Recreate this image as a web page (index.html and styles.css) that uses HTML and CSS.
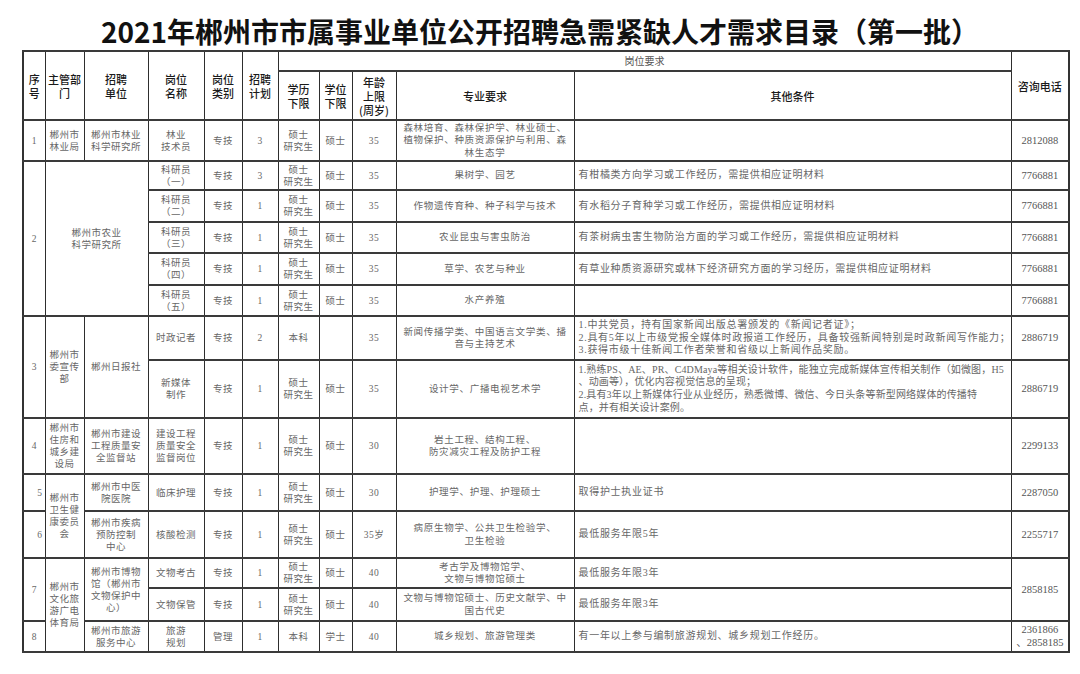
FILE: index.html
```html
<!DOCTYPE html>
<html lang="zh-CN">
<head>
<meta charset="utf-8">
<title>2021年郴州市市属事业单位公开招聘急需紧缺人才需求目录（第一批）</title>
<link rel="stylesheet" href="styles.css">
</head>
<body>
<h1 class="title">2021年郴州市市属事业单位公开招聘急需紧缺人才需求目录（第一批）</h1>
<table class="grid">
<colgroup>
<col class="c-no"><col class="c-dept"><col class="c-unit"><col class="c-post"><col class="c-type"><col class="c-plan"><col class="c-edu"><col class="c-deg"><col class="c-age"><col class="c-major"><col class="c-other"><col class="c-tel">
</colgroup>
<thead>
<tr class="hh1">
<th rowspan="2">序<br>号</th>
<th rowspan="2">主管部<br>门</th>
<th rowspan="2">招聘<br>单位</th>
<th rowspan="2">岗位<br>名称</th>
<th rowspan="2">岗位<br>类别</th>
<th rowspan="2">招聘<br>计划</th>
<th colspan="5" class="sub">岗位要求</th>
<th rowspan="2">咨询电话</th>
</tr>
<tr class="hh2">
<th>学历<br>下限</th>
<th>学位<br>下限</th>
<th>年龄<br>上限<br>(周岁)</th>
<th>专业要求</th>
<th>其他条件</th>
</tr>
</thead>
<tbody>
<tr class="r41">
<td>1</td><td>郴州市<br>林业局</td><td>郴州市林业<br>科学研究所</td><td>林业<br>技术员</td><td>专技</td><td>3</td><td>硕士<br>研究生</td><td>硕士</td><td>35</td>
<td class="major">森林培育、森林保护学、林业硕士、<br>植物保护、种质资源保护与利用、森<br>林生态学</td><td class="other"></td><td class="tel">2812088</td>
</tr>
<tr class="r29">
<td rowspan="5">2</td><td colspan="2" rowspan="5">郴州市农业<br>科学研究所</td><td>科研员<br>（一）</td><td>专技</td><td>3</td><td>硕士<br>研究生</td><td>硕士</td><td>35</td>
<td class="major">果树学、园艺</td><td class="other">有柑橘类方向学习或工作经历，需提供相应证明材料</td><td class="tel">7766881</td>
</tr>
<tr class="r32">
<td>科研员<br>（二）</td><td>专技</td><td>1</td><td>硕士<br>研究生</td><td>硕士</td><td>35</td>
<td class="major">作物遗传育种、种子科学与技术</td><td class="other">有水稻分子育种学习或工作经历，需提供相应证明材料</td><td class="tel">7766881</td>
</tr>
<tr class="r31">
<td>科研员<br>（三）</td><td>专技</td><td>1</td><td>硕士<br>研究生</td><td>硕士</td><td>35</td>
<td class="major">农业昆虫与害虫防治</td><td class="other">有茶树病虫害生物防治方面的学习或工作经历，需提供相应证明材料</td><td class="tel">7766881</td>
</tr>
<tr class="r32">
<td>科研员<br>（四）</td><td>专技</td><td>1</td><td>硕士<br>研究生</td><td>硕士</td><td>35</td>
<td class="major">草学、农艺与种业</td><td class="other">有草业种质资源研究或林下经济研究方面的学习经历，需提供相应证明材料</td><td class="tel">7766881</td>
</tr>
<tr class="r31">
<td>科研员<br>（五）</td><td>专技</td><td>1</td><td>硕士<br>研究生</td><td>硕士</td><td>35</td>
<td class="major">水产养殖</td><td class="other"></td><td class="tel">7766881</td>
</tr>
<tr class="r44">
<td rowspan="2">3</td><td rowspan="2">郴州市<br>委宣传<br>部</td><td rowspan="2">郴州日报社</td><td>时政记者</td><td>专技</td><td>2</td><td>本科</td><td></td><td>35</td>
<td class="major">新闻传播学类、中国语言文学类、播<br>音与主持艺术</td>
<td class="other">1.中共党员，持有国家新闻出版总署颁发的《新闻记者证》；<br>2.具有5年以上市级党报全媒体时政报道工作经历，具备较强新闻特别是时政新闻写作能力；<br>3.获得市级十佳新闻工作者荣誉和省级以上新闻作品奖励。</td>
<td class="tel">2886719</td>
</tr>
<tr class="r58">
<td>新媒体<br>制作</td><td>专技</td><td>1</td><td>硕士<br>研究生</td><td>硕士</td><td>35</td>
<td class="major">设计学、广播电视艺术学</td>
<td class="other tight">1.熟练PS、AE、PR、C4DMaya等相关设计软件，能独立完成新媒体宣传相关制作（如微图，H5<br>、动画等），优化内容视觉信息的呈现；<br>2.具有3年以上新媒体行业从业经历，熟悉微博、微信、今日头条等新型网络媒体的传播特<br>点，并有相关设计案例。</td>
<td class="tel">2886719</td>
</tr>
<tr class="r56">
<td>4</td><td>郴州市<br>住房和<br>城乡建<br>设局</td><td>郴州市建设<br>工程质量安<br>全监督站</td><td>建设工程<br>质量安全<br>监督岗位</td><td>专技</td><td>1</td><td>硕士<br>研究生</td><td>硕士</td><td>30</td>
<td class="major">岩土工程、结构工程、<br>防灾减灾工程及防护工程</td><td class="other"></td><td class="tel">2299133</td>
</tr>
<tr class="r37">
<td class="rt">5</td><td rowspan="2">郴州市<br>卫生健<br>康委员<br>会</td><td>郴州市中医<br>院医院</td><td>临床护理</td><td>专技</td><td>1</td><td>硕士<br>研究生</td><td>硕士</td><td>30</td>
<td class="major">护理学、护理、护理硕士</td><td class="other">取得护士执业证书</td><td class="tel">2287050</td>
</tr>
<tr class="r47">
<td class="rt">6</td><td>郴州市疾病<br>预防控制<br>中心</td><td>核酸检测</td><td>专技</td><td>1</td><td>硕士<br>研究生</td><td>硕士</td><td>35岁</td>
<td class="major">病原生物学、公共卫生检验学、<br>卫生检验</td><td class="other">最低服务年限5年</td><td class="tel">2255717</td>
</tr>
<tr class="r30">
<td rowspan="2">7</td><td rowspan="3">郴州市<br>文化旅<br>游广电<br>体育局</td><td rowspan="2">郴州市博物<br>馆（郴州市<br>文物保护中<br>心）</td><td>文物考古</td><td>专技</td><td>1</td><td>硕士<br>研究生</td><td>硕士</td><td>40</td>
<td class="major">考古学及博物馆学、<br>文物与博物馆硕士</td><td class="other">最低服务年限3年</td><td class="tel" rowspan="2">2858185</td>
</tr>
<tr class="r33">
<td>文物保管</td><td>专技</td><td>1</td><td>硕士<br>研究生</td><td>硕士</td><td>40</td>
<td class="major">文物与博物馆硕士、历史文献学、中<br>国古代史</td><td class="other">最低服务年限3年</td>
</tr>
<tr class="r31">
<td>8</td><td>郴州市旅游<br>服务中心</td><td>旅游<br>规划</td><td>管理</td><td>1</td><td>本科</td><td>学士</td><td>40</td>
<td class="major">城乡规划、旅游管理类</td><td class="other">有一年以上参与编制旅游规划、城乡规划工作经历。</td><td class="tel tel2">2361866<br>、2858185</td>
</tr>
</tbody>
</table>
</body>
</html>
```
FILE: styles.css
```css
html, body {
  margin: 0;
  padding: 0;
  background: #ffffff;
}
body {
  font-family: "Liberation Serif", "Noto Sans CJK SC", serif;
  width: 1080px;
}
.title {
  margin: 0;
  height: 50px;
  box-sizing: border-box;
  padding-top: 17px;
  font-family: "Noto Sans CJK SC", sans-serif;
  font-weight: 700;
  font-size: 28px;
  line-height: 28px;
  text-align: center;
  color: #111111;
  letter-spacing: 0;
}
.grid {
  margin-left: 22px;
  width: 1046px;
  table-layout: fixed;
  border-collapse: collapse;
  border: 2px solid #333333;
}
.c-no { width: 22px; }
.c-dept { width: 39px; }
.c-unit { width: 64px; }
.c-post { width: 56px; }
.c-type { width: 38px; }
.c-plan { width: 36px; }
.c-edu { width: 41px; }
.c-deg { width: 33px; }
.c-age { width: 44px; }
.c-major { width: 178px; }
.c-other { width: 437px; }
.c-tel { width: 58px; }

.grid th, .grid td {
  border-left: 1px solid #2e2e2e;
  border-right: 1px solid #2e2e2e;
  border-top: 2px solid #3a3a3a;
  border-bottom: 2px solid #3a3a3a;
  padding: 0 1px;
  text-align: center;
  vertical-align: middle;
  white-space: nowrap;
  overflow: hidden;
}
.grid th {
  font-family: "Noto Sans CJK SC", sans-serif;
  font-weight: 500;
  font-size: 11px;
  line-height: 14px;
  color: #1a1a1a;
}
.grid th.sub {
  font-weight: 400;
  font-size: 10px;
  color: #555555;
}
.hh1 { height: 20px; }
.hh2 { height: 49px; }

.grid td {
  font-size: 9.5px;
  line-height: 12px;
  letter-spacing: 0.5px;
  color: #676767;
}
.grid td.rt {
  text-align: right;
  padding-right: 2px;
}
.grid td.major {
  letter-spacing: 0.7px;
  line-height: 12.5px;
}
.grid td.other {
  text-align: left;
  padding-left: 4px;
  font-size: 10px;
  letter-spacing: 0.7px;
  line-height: 12.6px;
}
.grid td.other.tight {
  letter-spacing: 0.15px;
}
.grid td.tel {
  font-size: 10.5px;
  letter-spacing: 0;
  color: #555555;
  line-height: 14px;
}
.grid td.tel2 {
  line-height: 12.5px;
}

.r29 { height: 29px; }
.r30 { height: 30px; }
.r31 { height: 31px; }
.r32 { height: 32px; }
.r33 { height: 33px; }
.r37 { height: 37px; }
.r41 { height: 41px; }
.r44 { height: 44px; }
.r47 { height: 47px; }
.r56 { height: 56px; }
.r58 { height: 58px; }
```
